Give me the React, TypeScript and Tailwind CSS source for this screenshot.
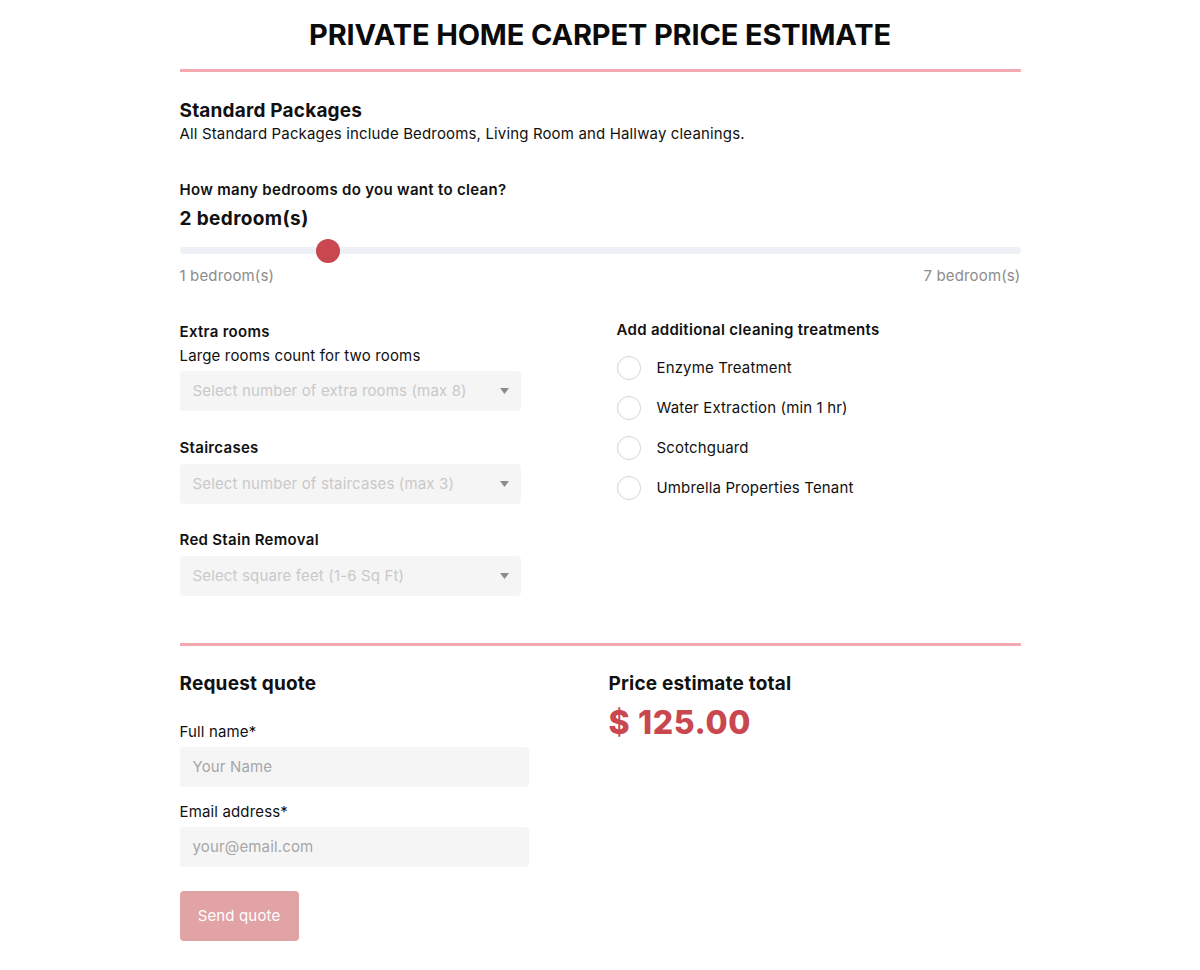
import React from "react";

function SelectBox({ placeholder }: { placeholder: string }) {
  return (
    <div className="flex h-[40px] w-[341px] items-center justify-between rounded-[4px] bg-[#f5f5f5] pl-[13px] pr-[12px]">
      <span className="text-[15px] tracking-[0.01em] text-[#c9c9c9]">{placeholder}</span>
      <svg width="9" height="6" viewBox="0 0 9 6">
        <path d="M0 0 L9 0 L4.5 6 Z" fill="#8c8c8c" />
      </svg>
    </div>
  );
}

function Radio({ label }: { label: string }) {
  return (
    <div className="flex h-[40px] items-center">
      <div className="h-[24px] w-[24px] rounded-full border border-[#d4d4d4] bg-white" />
      <span className="ml-[16px] text-[15px] tracking-[0.01em] text-[#111]">{label}</span>
    </div>
  );
}

export default function App() {
  return (
    <div className="min-h-[970px] bg-white text-[#111]" style={{ fontFamily: "Inter, 'Noto Sans', sans-serif" }}>
      <div className="mx-auto w-[841px] pb-[29px]">
        <h1 className="pt-[17px] text-center text-[29px] font-bold leading-[36px] tracking-[-0.005em] text-[#0b0b0b]">
          PRIVATE HOME CARPET PRICE ESTIMATE
        </h1>
        <div className="mt-[16px] h-[3px] bg-[#f4aab0]" />

        <h2 className="mt-[27px] text-[19px] font-bold leading-[24px] tracking-[0.01em]">Standard Packages</h2>
        <p className="text-[15px] leading-[22px] tracking-[0.01em]">
          All Standard Packages include Bedrooms, Living Room and Hallway cleanings.
        </p>

        <div className="mt-[34px] text-[15px] font-semibold leading-[22px] tracking-[0.02em]">How many bedrooms do you want to clean?</div>
        <div className="mt-[6px] text-[19px] font-bold leading-[24px] tracking-[0.02em]">2 bedroom(s)</div>
        <div className="relative mt-[8px] h-[24px]">
          <div className="absolute left-0 right-0 top-[8px] h-[7px] rounded-full bg-[#edf1f5]" />
          <div className="absolute left-[136px] top-0 h-[24px] w-[24px] rounded-full bg-[#c9474f]" />
        </div>
        <div className="mt-[2px] flex justify-between text-[15px] leading-[22px] tracking-[0.01em] text-[#8c8c8c]">
          <span>1 bedroom(s)</span>
          <span>7 bedroom(s)</span>
        </div>

        <div className="mt-[34px] flex">
          <div className="w-[341px]">
            <div className="text-[15px] font-semibold leading-[22px] tracking-[0.02em]">Extra rooms</div>
            <div className="mt-[2px] text-[15px] leading-[22px] tracking-[0.01em]">Large rooms count for two rooms</div>
            <div className="mt-[4px]">
              <SelectBox placeholder="Select number of extra rooms (max 8)" />
            </div>
            <div className="mt-[26px] text-[15px] font-semibold leading-[22px] tracking-[0.02em]">Staircases</div>
            <div className="mt-[5px]">
              <SelectBox placeholder="Select number of staircases (max 3)" />
            </div>
            <div className="mt-[25px] text-[15px] font-semibold leading-[22px] tracking-[0.02em]">Red Stain Removal</div>
            <div className="mt-[5px]">
              <SelectBox placeholder="Select square feet (1-6 Sq Ft)" />
            </div>
          </div>
          <div className="ml-[96px] flex-1">
            <div className="-mt-[2px] text-[15px] font-semibold leading-[22px] tracking-[0.02em]">Add additional cleaning treatments</div>
            <div className="mt-[7px]">
              <Radio label="Enzyme Treatment" />
              <Radio label="Water Extraction (min 1 hr)" />
              <Radio label="Scotchguard" />
              <Radio label="Umbrella Properties Tenant" />
            </div>
          </div>
        </div>

        <div className="mt-[47px] h-[3px] bg-[#f4aab0]" />

        <div className="mt-[26px] flex">
          <div className="w-[349px]">
            <h3 className="text-[19px] font-bold leading-[24px] tracking-[0.01em]">Request quote</h3>
            <div className="mt-[25px] text-[15px] leading-[22px] tracking-[0.01em]">Full name*</div>
            <div className="mt-[4px] flex h-[40px] items-center rounded-[4px] bg-[#f5f5f5] pl-[13px] text-[15px] tracking-[0.01em] text-[#a6a6a6]">
              Your Name
            </div>
            <div className="mt-[14px] text-[15px] leading-[22px] tracking-[0.01em]">Email address*</div>
            <div className="mt-[4px] flex h-[40px] items-center rounded-[4px] bg-[#f5f5f5] pl-[13px] text-[15px] tracking-[0.01em] text-[#a6a6a6]">
              your@email.com
            </div>
            <button className="mt-[24px] h-[50px] w-[119px] rounded-[4px] bg-[#e1a3a6] text-[15px] tracking-[0.01em] text-white">
              Send quote
            </button>
          </div>
          <div className="ml-[80px]">
            <h3 className="text-[19px] font-bold leading-[24px] tracking-[0.01em]">Price estimate total</h3>
            <div className="mt-[9px] text-[32px] font-extrabold leading-[36px] tracking-[0.02em] text-[#c9474f]">$ 125.00</div>
          </div>
        </div>
      </div>
    </div>
  );
}
